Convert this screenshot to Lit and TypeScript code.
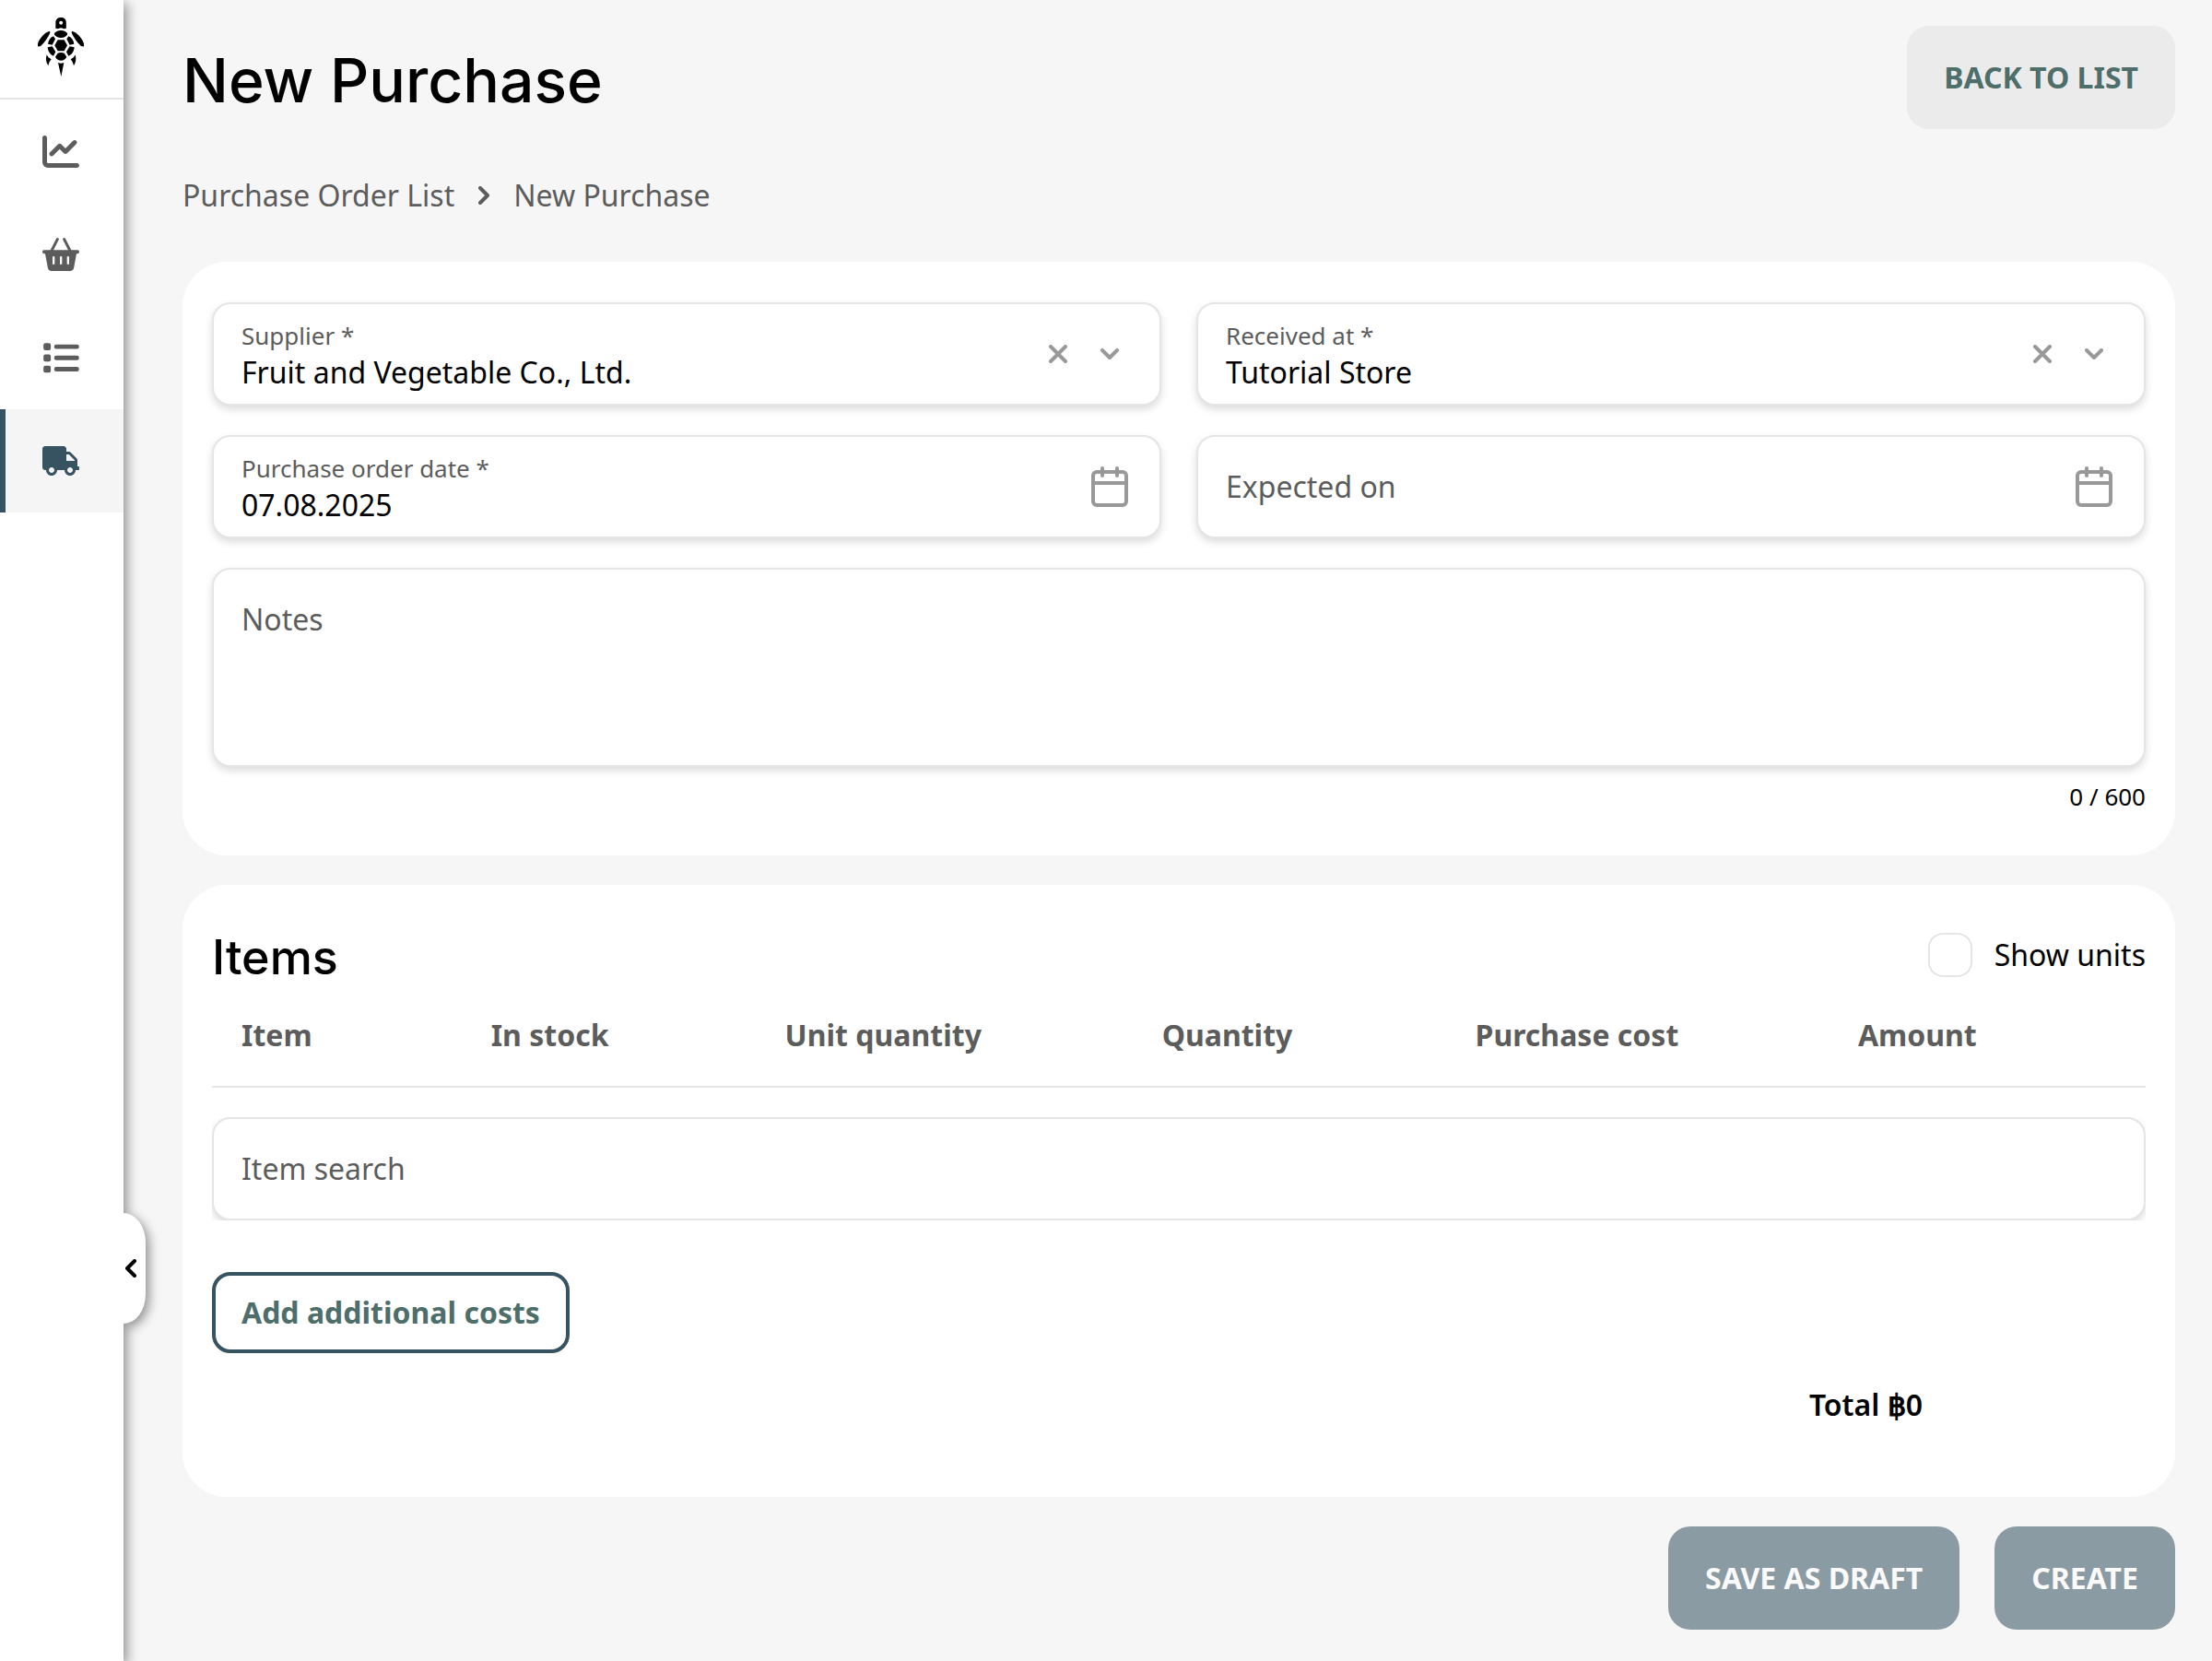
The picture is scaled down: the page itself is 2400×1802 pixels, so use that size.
import { LitElement, html, css, svg, nothing } from "lit";
import { customElement, property, state } from "lit/decorators.js";
import { classMap } from "lit/directives/class-map.js";

const turtle = svg`<svg viewBox="120 54 156 198" width="52" height="66" fill="currentColor" aria-hidden="true">
  <path fill-rule="evenodd" d="M181 92V74c0-11 7-17 17.500-17s17 6 17 17v18c-3 1-7 2-10 1-4-3-10-3-14 0-4 1-8 0-10.500-1zM198.500 68.500a6 6 0 1 0 0 12 6 6 0 0 0 0-12z"/>
  <path d="M176 111c4-8 12-12 22.500-12s18 4 21.500 12c-4 8-12 12-21.500 12S180 119 176 111z"/>
  <path d="M188 130h21l10 18-10 18h-21l-10-18z"/>
  <path d="M162 101c-16 4-33 22-39 41v9c3 1 7 0 10-2 12-11 23-27 30-42z"/>
  <path d="M234 101c16 4 33 22 39 41v9c-3 1-7 0-10-2-12-11-23-27-30-42z"/>
  <path d="M174 118l6 9-10 19-14-3c1-11 8-21 18-25z"/>
  <path d="M223 118l-6 9 10 19 14-3c-1-11-8-21-18-25z"/>
  <path d="M155 154l15-3 11 18-7 13c-11-4-18-15-19-28z"/>
  <path d="M242 154l-15-3-11 18 7 13c11-4 18-15 19-28z"/>
  <path d="M180 185l8-12c6-3 15-3 21 0l8 12c-4 8-11 12-18.500 12S184 193 180 185z"/>
  <path d="M152 178c3 7 8 12 15 15-5 5-8 12-10 21-7-10-9-23-5-36z"/>
  <path d="M245 178c-3 7-8 12-15 15 5 5 8 12 10 21 7-10 9-23 5-36z"/>
  <path d="M189 204c6 3 12 3 19 0l-9 45z"/>
</svg>`;

const chart = svg`<svg viewBox="0 32 512 448" width="40" height="35" fill="currentColor" aria-hidden="true">
  <path d="M64 64c0-17.700-14.300-32-32-32S0 46.300 0 64V400c0 44.200 35.800 80 80 80H480c17.700 0 32-14.300 32-32s-14.300-32-32-32H80c-8.800 0-16-7.200-16-16V64zm406.600 86.600c12.500-12.500 12.500-32.800 0-45.300s-32.800-12.500-45.300 0L320 210.700l-57.400-57.400c-12.500-12.500-32.800-12.500-45.300 0l-112 112c-12.500 12.500-12.500 32.800 0 45.300s32.800 12.500 45.300 0L240 221.300l57.400 57.400c12.500 12.500 32.800 12.500 45.300 0l128-128z"/>
</svg>`;

const basket = svg`<svg viewBox="138 774 120 108" width="40" height="36" aria-hidden="true">
  <path d="M187 779l-19 37M209 779l19 37" fill="none" stroke="currentColor" stroke-width="9" stroke-linecap="round"/>
  <path fill="currentColor" fill-rule="evenodd" d="M143 814h110q5 0 5 6t-6 6h-3l-9 48q-2 8-10 8h-64q-8 0-10-8l-9-48h-3q-6 0-6-6t5-6zM171 837v21q0 3 3.500 3t3.500-3v-21q0-3-3.500-3t-3.500 3zM195 837v21q0 3 3.500 3t3.500-3v-21q0-3-3.500-3t-3.500 3zM218 837v21q0 3 3.500 3t3.500-3v-21q0-3-3.500-3t-3.500 3z"/>
</svg>`;

const list = svg`<svg viewBox="138 154 120 100" width="40" height="33" fill="currentColor" aria-hidden="true">
  <rect x="141" y="155" width="24" height="23" rx="6"/><rect x="141" y="192" width="24" height="23" rx="6"/><rect x="141" y="229" width="24" height="23" rx="6"/>
  <rect x="176" y="159" width="82" height="15" rx="7"/><rect x="176" y="196" width="82" height="15" rx="7"/><rect x="176" y="233" width="82" height="15" rx="7"/>
</svg>`;

const truck = svg`<svg viewBox="0 0 640 512" width="40" height="32" fill="currentColor" aria-hidden="true">
  <path d="M624 352h-16V243.900c0-12.700-5.100-24.900-14.100-33.900L494 110.100c-9-9-21.200-14.100-33.900-14.100H416V48c0-26.500-21.500-48-48-48H48C21.500 0 0 21.500 0 48v320c0 26.500 21.500 48 48 48h16c0 53 43 96 96 96s96-43 96-96h128c0 53 43 96 96 96s96-43 96-96h48c8.800 0 16-7.200 16-16v-32c0-8.800-7.200-16-16-16zM160 464c-26.500 0-48-21.500-48-48s21.500-48 48-48 48 21.500 48 48-21.500 48-48 48zm320 0c-26.500 0-48-21.500-48-48s21.500-48 48-48 48 21.500 48 48-21.500 48-48 48zm80-208H416V144h44.100l99.900 99.900V256z"/>
</svg>`;

const stroked = (w: number, h: number, d: string) => svg`<svg viewBox="0 0 ${w} ${h}" width=${w} height=${h}
  fill="none" stroke="currentColor" stroke-width="4" stroke-linecap="round" stroke-linejoin="round" aria-hidden="true"><path d=${d}/></svg>`;

const closeIcon = stroked(20, 20, "M2 2l16 16M18 2L2 18");
const downIcon = stroked(20, 12, "M2 2l8 8 8-8");
const calendarIcon = stroked(40, 44, "M6 6h28a4 4 0 0 1 4 4v28a4 4 0 0 1-4 4H6a4 4 0 0 1-4-4V10a4 4 0 0 1 4-4zM2 18h36M12 2v8M28 2v8");
const crumbIcon = stroked(12, 20, "M2 2l8 8-8 8");
const collapseIcon = stroked(12, 20, "M10 2l-8 8 8 8");

const base = css`
  * { box-sizing: border-box; }
  svg { display: block; }
  button, input, select, textarea {
    font: inherit;
    color: inherit;
    margin: 0;
    padding: 0;
    border: 0;
    background: none;
    outline: none;
    appearance: none;
    border-radius: 0;
  }
  button { cursor: pointer; }
`;

@customElement("side-nav")
class SideNav extends LitElement {
  static styles = [base, css`
    :host {
      position: relative;
      z-index: 1;
      display: block;
      flex: none;
      width: 134px;
      background: #fff;
      box-shadow: 4px 4px 12px rgba(0, 0, 0, 0.4);
    }
    .logo {
      display: flex;
      justify-content: center;
      height: 108px;
      padding: 18px 2px 0 0;
      border-bottom: 2px solid #e5e5e5;
      color: #000;
    }
    .item {
      display: flex;
      align-items: center;
      justify-content: center;
      height: 112px;
      padding-right: 2px;
      color: #5c5c5c;
    }
    .active {
      color: #375362;
      background: #f5f5f5;
      box-shadow: inset 6px 0 #375362;
    }
    .toggle {
      position: absolute;
      left: 100%;
      bottom: 366px;
      display: flex;
      align-items: center;
      width: 24px;
      height: 120px;
      padding-left: 2px;
      color: #000;
      background: #fff;
      border-radius: 0 24px 24px 0 / 0 32px 32px 0;
      box-shadow: 4px 4px 12px rgba(0, 0, 0, 0.4);
      clip-path: inset(-24px -32px -24px 0);
    }
  `];

  private items = [
    { label: "Reports", icon: chart },
    { label: "Sales", icon: basket },
    { label: "Catalog", icon: list },
    { label: "Purchasing", icon: truck, active: true },
  ];

  render() {
    return html`
      <a class="logo" href="#" aria-label="Home">${turtle}</a>
      <nav>
        ${this.items.map((i) => html`<a class=${classMap({ item: true, active: !!i.active })} href="#" aria-label=${i.label}>${i.icon}</a>`)}
      </nav>
      <button class="toggle" type="button" aria-label="Collapse menu">${collapseIcon}</button>
    `;
  }
}

@customElement("form-field")
class FormField extends LitElement {
  @property() label = "";
  @property() value = "";
  @property() kind: "select" | "date" | "text" | "area" = "text";

  static styles = [base, css`
    :host { display: block; min-width: 0; }
    .box {
      display: flex;
      align-items: center;
      height: 112px;
      padding: 0 30px;
      color: #000;
      background: #fff;
      border: 2px solid #e5e5e5;
      border-radius: 20px;
      box-shadow: 0 4px 8px rgba(0, 0, 0, 0.14);
      font-size: 32px;
      line-height: 44px;
    }
    .area { height: 216px; align-items: stretch; }
    .filled, .empty { flex: 1; min-width: 0; }
    .filled { display: flex; flex-direction: column; padding-top: 4px; }
    .filled label { font-size: 26px; line-height: 36px; }
    label { color: #5c5c5c; }
    .empty { display: grid; }
    .empty > * { grid-area: 1 / 1; }
    .area .empty { padding: 32px 0; }
    input, select, textarea { width: 100%; height: 44px; line-height: 44px; background: transparent; }
    textarea { height: 100%; resize: none; }
    .actions { display: flex; align-items: center; gap: 36px; padding-right: 14px; color: #999; }
    .date .actions { padding-right: 4px; }
  `];

  private control() {
    if (this.kind === "select") return html`<select id="c"><option>${this.value}</option></select>`;
    if (this.kind === "area") return html`<textarea id="c" maxlength="600"></textarea>`;
    return html`<input id="c" type="text" .value=${this.value}>`;
  }

  private actions() {
    if (this.kind === "select") return html`<div class="actions"><button type="button" aria-label="Clear">${closeIcon}</button>${downIcon}</div>`;
    if (this.kind === "date") return html`<div class="actions"><button type="button" aria-label="Open calendar">${calendarIcon}</button></div>`;
    return nothing;
  }

  render() {
    return html`<div class=${classMap({ box: true, [this.kind]: true })}>
      <div class=${this.value ? "filled" : "empty"}>
        <label for="c">${this.label}</label>
        ${this.control()}
      </div>
      ${this.actions()}
    </div>`;
  }
}

@customElement("app-root")
class AppRoot extends LitElement {
  @state() private columns = ["Item", "In stock", "Unit quantity", "Quantity", "Purchase cost", "Amount"];

  static styles = [base, css`
    :host {
      display: flex;
      min-height: 100vh;
      color: #000;
      background: #f6f6f6;
      font-family: "Noto Sans", "Liberation Sans", sans-serif;
      font-size: 32px;
      line-height: 44px;
    }
    main {
      flex: 1;
      min-width: 0;
      padding: 28px 40px 34px 64px;
    }
    header { display: flex; align-items: center; justify-content: space-between; }
    h1, h2 { margin: 0; padding-top: 6px; font-family: Inter, sans-serif; font-weight: 500; }
    h1 { font-size: 66px; line-height: 84px; }
    h2 { font-size: 52px; line-height: 58px; }
    .btn {
      height: 112px;
      padding: 0 40px;
      border-radius: 24px;
      font-weight: 700;
      text-transform: uppercase;
    }
    .back { display: flex; align-items: center; color: #4d6e6a; background: #ebebeb; text-decoration: none; }
    .primary { color: #fafafa; background: #8b9ba3; }
    .crumbs { display: flex; align-items: center; gap: 26px; margin: 50px 0; color: #5c5c5c; }
    .crumbs a { color: inherit; text-decoration: none; }
    .card { margin-bottom: 32px; padding: 44px 32px 46px; background: #fff; border-radius: 48px; }
    .fields { display: grid; grid-template-columns: 1fr 1fr; gap: 32px 38px; }
    .wide { grid-column: 1 / -1; }
    .counter { margin-top: 14px; font-size: 26px; line-height: 36px; text-align: right; }
    .items { padding-bottom: 78px; }
    .bar { display: flex; align-items: center; justify-content: space-between; height: 64px; }
    .check { display: flex; align-items: center; gap: 24px; }
    .check input { width: 48px; height: 48px; border: 2px solid #e5e5e5; border-radius: 16px; }
    table { width: 100%; table-layout: fixed; border-collapse: collapse; }
    th {
      padding: 33px 0 33px 32px;
      color: #5c5c5c;
      font-weight: 700;
      text-align: left;
      border-bottom: 2px solid #e5e5e5;
    }
    .c0 { width: 12.9%; }
    .c1 { width: 15.2%; }
    .c2 { width: 19.5%; }
    .c3 { width: 16.2%; }
    .c4 { width: 19.8%; }
    .search { margin-top: 32px; overflow: hidden; }
    .add {
      height: 88px;
      margin-top: 56px;
      padding: 0 28px;
      color: #4d6e6a;
      border: 4px solid #375362;
      border-radius: 20px;
      font-weight: 700;
    }
    .total { margin-top: 34px; padding-right: 242px; text-align: right; font-weight: 600; }
    .actions { display: flex; justify-content: flex-end; gap: 38px; }
  `];

  render() {
    return html`
      <side-nav></side-nav>
      <main>
        <header>
          <h1>New Purchase</h1>
          <a class="btn back" href="#">Back to list</a>
        </header>
        <nav class="crumbs" aria-label="Breadcrumb">
          <a href="#">Purchase Order List</a>${crumbIcon}<span>New Purchase</span>
        </nav>

        <section class="card">
          <div class="fields">
            <form-field kind="select" label="Supplier *" value="Fruit and Vegetable Co., Ltd."></form-field>
            <form-field kind="select" label="Received at *" value="Tutorial Store"></form-field>
            <form-field kind="date" label="Purchase order date *" value="07.08.2025"></form-field>
            <form-field kind="date" label="Expected on"></form-field>
            <form-field class="wide" kind="area" label="Notes"></form-field>
          </div>
          <div class="counter">0 / 600</div>
        </section>

        <section class="card items">
          <div class="bar">
            <h2>Items</h2>
            <label class="check"><input type="checkbox">Show units</label>
          </div>
          <table>
            <thead><tr>${this.columns.map((c, i) => html`<th class="c${i}" scope="col">${c}</th>`)}</tr></thead>
          </table>
          <div class="search"><form-field label="Item search"></form-field></div>
          <button class="add" type="button">Add additional costs</button>
          <div class="total">Total ฿0</div>
        </section>

        <div class="actions">
          <button class="btn primary" type="button">Save as draft</button>
          <button class="btn primary" type="button">Create</button>
        </div>
      </main>
    `;
  }
}
